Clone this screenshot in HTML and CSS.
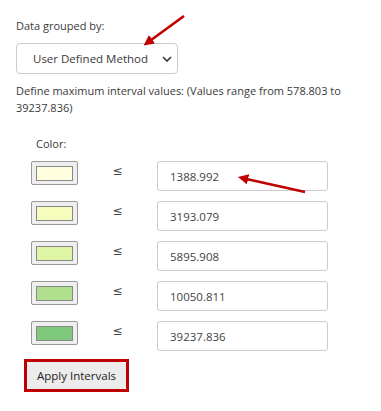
FILE: index.html
```html
<!DOCTYPE html>
<html lang="en">
<head>
    <meta charset="UTF-8">
    <meta name="viewport" content="width=device-width, initial-scale=1.0">
    <title>Data grouping</title>
    <link rel="stylesheet" href="styles.css">
</head>
<body>
    <div class="panel">
        <label class="field-label" for="method">Data grouped by:</label>
        <div class="select-box" id="method">
            <span>User Defined Method</span>
            <svg class="chevron" width="10" height="6" viewBox="0 0 10 6"><path d="M1 1 L5 5 L9 1" fill="none" stroke="#333" stroke-width="1.6"/></svg>
        </div>

        <p class="hint">Define maximum interval values: (Values range from 578.803 to 39237.836)</p>

        <div class="intervals">
            <div class="color-head">Color:</div>
            <div class="rows">
                <div class="swatch"><span style="background:#ffffdf"></span></div>
                <div class="leq">≤</div>
                <input class="value" type="text" value="1388.992">

                <div class="swatch"><span style="background:#f6fcbc"></span></div>
                <div class="leq">≤</div>
                <input class="value" type="text" value="3193.079">

                <div class="swatch"><span style="background:#dff5a6"></span></div>
                <div class="leq">≤</div>
                <input class="value" type="text" value="5895.908">

                <div class="swatch"><span style="background:#b0e08e"></span></div>
                <div class="leq">≤</div>
                <input class="value" type="text" value="10050.811">

                <div class="swatch"><span style="background:#7ec97c"></span></div>
                <div class="leq">≤</div>
                <input class="value" type="text" value="39237.836">
            </div>
        </div>

        <div class="apply-wrap">
            <button class="apply">Apply Intervals</button>
        </div>
    </div>

    <!-- annotation arrows -->
    <svg class="arrows" width="381" height="411" viewBox="0 0 381 411">
        <defs>
            <marker id="head" markerWidth="4" markerHeight="4" refX="2.4" refY="2" orient="auto" markerUnits="strokeWidth">
                <path d="M0 0 L4 2 L0 4 Z" fill="#c00000"/>
            </marker>
        </defs>
        <line x1="184" y1="16" x2="147" y2="43" stroke="#c00000" stroke-width="2.6" marker-end="url(#head)"/>
        <line x1="305" y1="192" x2="242" y2="178" stroke="#c00000" stroke-width="2.6" marker-end="url(#head)"/>
    </svg>
</body>
</html>
```

FILE: styles.css
```css
body {
    margin: 0;
    font-family: "Open Sans", Arial, sans-serif;
    font-size: 11px;
    color: #3a3a3a;
    background: #fff;
}
.panel {
    padding: 18px 0 0 16px;
}
.field-label {
    display: block;
    line-height: 15px;
    margin-bottom: 10px;
}
.select-box {
    width: 162px;
    height: 31px;
    box-sizing: border-box;
    border: 1px solid #ccc;
    border-radius: 4px;
    display: flex;
    align-items: center;
    justify-content: space-between;
    padding: 0 5px 0 16px;
    font-size: 11.5px;
}
.chevron {
    margin-top: 1px;
}
.hint {
    margin: 8px 0 0;
    line-height: 17px;
    width: 360px;
}
.intervals {
    padding-left: 15px;
}
.color-head {
    margin: 20px 0 0 5px;
    line-height: 15px;
}
.rows {
    display: grid;
    grid-template-columns: 47px 79px 171px;
    row-gap: 10px;
    margin-top: 10px;
    align-items: start;
}
.swatch {
    width: 47px;
    height: 24px;
    box-sizing: border-box;
    background: #efefef;
    border: 1px solid #999;
    border-radius: 2px;
    padding: 4px 4px 3px 4px;
}
.swatch span {
    display: block;
    height: 100%;
    box-sizing: border-box;
    border: 1px solid #888;
}
.leq {
    text-align: center;
    font-family: "DejaVu Sans", sans-serif;
    font-size: 12px;
    line-height: 16px;
    margin-top: 2px;
    color: #444;
}
.value {
    width: 171px;
    height: 30px;
    box-sizing: border-box;
    border: 1px solid #ccc;
    border-radius: 3px;
    padding: 0 12px;
    font-family: "Open Sans", Arial, sans-serif;
    font-size: 11.5px;
    color: #444;
}
.apply-wrap {
    display: inline-block;
    margin: 8px 0 0 8px;
    border: 3px solid #c00000;
    padding: 0;
}
.apply {
    display: block;
    background: #ececec;
    border: none;
    border-radius: 4px;
    height: 27px;
    padding: 0 10px;
    font-family: "Open Sans", Arial, sans-serif;
    font-size: 11.5px;
    color: #222;
}
.arrows {
    position: absolute;
    left: 0;
    top: 0;
    pointer-events: none;
}
```
